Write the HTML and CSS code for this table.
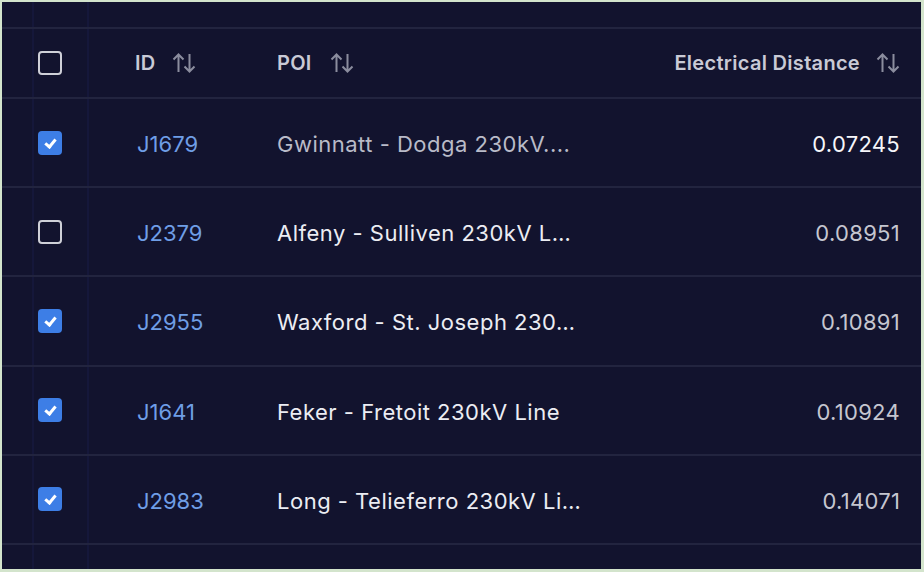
FILE: index.html
```html
<!DOCTYPE html>
<html lang="en">
<head>
    <meta charset="UTF-8">
    <meta name="viewport" content="width=device-width, initial-scale=1.0">
    <title>POI Results</title>
    <link rel="stylesheet" href="styles.css">
</head>
<body>
    <div class="table-frame">
        <!-- bande du haut (ligne précédente) -->
        <div class="row row-top">
            <div class="cell cell-check"></div>
        </div>

        <!-- En-tête -->
        <div class="row row-head">
            <div class="cell cell-check"><span class="checkbox"></span></div>
            <div class="cell cell-id">ID <svg class="sort-icon" viewBox="0 0 24 20"><path d="M6.5 19V1.5M1.5 6.5L6.5 1.5L11.5 6.5M17.5 1V18.5M12.5 13.5L17.5 18.5L22.5 13.5"/></svg></div>
            <div class="cell cell-poi">POI <svg class="sort-icon" viewBox="0 0 24 20"><path d="M6.5 19V1.5M1.5 6.5L6.5 1.5L11.5 6.5M17.5 1V18.5M12.5 13.5L17.5 18.5L22.5 13.5"/></svg></div>
            <div class="cell cell-dist">Electrical Distance <svg class="sort-icon" viewBox="0 0 24 20"><path d="M6.5 19V1.5M1.5 6.5L6.5 1.5L11.5 6.5M17.5 1V18.5M12.5 13.5L17.5 18.5L22.5 13.5"/></svg></div>
        </div>

        <div class="row row-data row-hover">
            <div class="cell cell-check"><span class="checkbox checked"></span></div>
            <div class="cell cell-id">J1679</div>
            <div class="cell cell-poi">Gwinnatt - Dodga 230kV....</div>
            <div class="cell cell-dist">0.07245</div>
        </div>

        <div class="row row-data">
            <div class="cell cell-check"><span class="checkbox"></span></div>
            <div class="cell cell-id">J2379</div>
            <div class="cell cell-poi">Alfeny - Sulliven 230kV L…</div>
            <div class="cell cell-dist">0.08951</div>
        </div>

        <div class="row row-data">
            <div class="cell cell-check"><span class="checkbox checked"></span></div>
            <div class="cell cell-id">J2955</div>
            <div class="cell cell-poi">Waxford - St. Joseph 230…</div>
            <div class="cell cell-dist">0.10891</div>
        </div>

        <div class="row row-data">
            <div class="cell cell-check"><span class="checkbox checked"></span></div>
            <div class="cell cell-id">J1641</div>
            <div class="cell cell-poi">Feker - Fretoit 230kV Line</div>
            <div class="cell cell-dist">0.10924</div>
        </div>

        <div class="row row-data">
            <div class="cell cell-check"><span class="checkbox checked"></span></div>
            <div class="cell cell-id">J2983</div>
            <div class="cell cell-poi">Long - Telieferro 230kV Li…</div>
            <div class="cell cell-dist">0.14071</div>
        </div>

        <div class="row row-bottom">
            <div class="cell cell-check"></div>
        </div>
    </div>
</body>
</html>
```

FILE: styles.css
```css
body {
    margin: 0;
    background: #d3e4cc;
    font-family: Inter, 'Noto Sans', sans-serif;
}

.table-frame {
    margin: 2px 3px 3px 2px;
    height: 567px;
    background: #12132e;
    overflow: hidden;
}

.row {
    display: grid;
    grid-template-columns: 98px 142px 1fr 340px;
    align-items: stretch;
    border-bottom: 2px solid #22243f;
}

.row-top {
    height: 25px;
}

.row-head {
    height: 68px;
}

.row-data {
    height: 87.2px;
}

.row-bottom {
    height: 40px;
    border-bottom: none;
}

.cell {
    display: flex;
    align-items: center;
}

.cell-check {
    padding-left: 36px;
    background:
        linear-gradient(90deg, transparent 30px, #15173a 30px, #15173a 32px, transparent 32px,
                        transparent 85px, #15173a 85px, #15173a 87px, transparent 87px);
}

.cell-id {
    padding-left: 35px;
}

.cell-poi {
    padding-left: 35px;
    white-space: nowrap;
}

.cell-dist {
    justify-content: flex-end;
    padding-right: 21px;
}

/* en-tête */
.row-head .cell {
    color: #c9cad6;
    font-size: 20px;
    font-weight: 600;
    letter-spacing: 0.3px;
}

.sort-icon {
    flex-shrink: 0;
    width: 24px;
    height: 20px;
    margin-left: 16px;
    fill: none;
    stroke: #8b8d9e;
    stroke-width: 2;
}

.row-head .cell-poi .sort-icon {
    margin-left: 18px;
}

/* lignes */
.row-data .cell {
    padding-top: 3px;
}

.row-data .cell-check {
    padding-top: 0;
}

.row-data .cell-id {
    color: #6f9ee6;
    font-size: 22px;
    padding-left: 37px;
}

.row-data .cell-poi {
    color: #ecedf3;
    font-size: 22px;
    letter-spacing: 0.5px;
}

.row-data .cell-dist {
    color: #c5c6d0;
    font-size: 22px;
    letter-spacing: 0.3px;
}

.row-hover .cell-poi {
    color: #b9bbc8;
}

.row-hover .cell-dist {
    color: #f6f6fa;
}

/* cases à cocher */
.checkbox {
    box-sizing: border-box;
    width: 24px;
    height: 24px;
    border: 2.5px solid #cfd0d8;
    border-radius: 4px;
    position: relative;
}

.checkbox.checked {
    border: none;
    background: #3d7ee6;
}

.checkbox.checked::after {
    content: '';
    position: absolute;
    left: 9px;
    top: 6px;
    width: 4px;
    height: 8px;
    border: solid #fff;
    border-width: 0 3px 3px 0;
    transform: rotate(40deg);
}
```
